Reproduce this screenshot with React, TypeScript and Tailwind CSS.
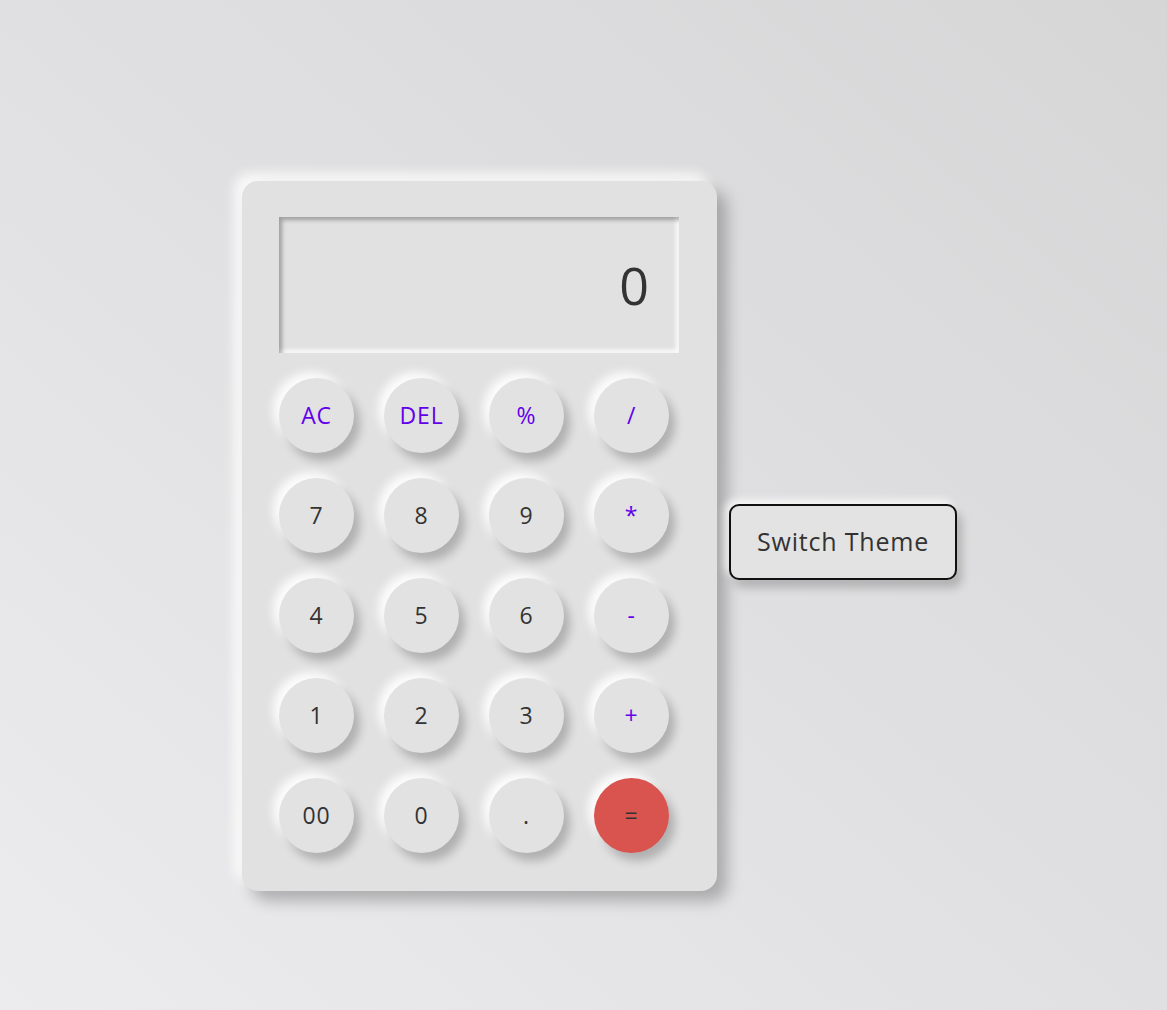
const keys: { label: string; kind: 'op' | 'num' | 'eq' }[] = [
  { label: 'AC', kind: 'op' },
  { label: 'DEL', kind: 'op' },
  { label: '%', kind: 'op' },
  { label: '/', kind: 'op' },
  { label: '7', kind: 'num' },
  { label: '8', kind: 'num' },
  { label: '9', kind: 'num' },
  { label: '*', kind: 'op' },
  { label: '4', kind: 'num' },
  { label: '5', kind: 'num' },
  { label: '6', kind: 'num' },
  { label: '-', kind: 'op' },
  { label: '1', kind: 'num' },
  { label: '2', kind: 'num' },
  { label: '3', kind: 'num' },
  { label: '+', kind: 'op' },
  { label: '00', kind: 'num' },
  { label: '0', kind: 'num' },
  { label: '.', kind: 'num' },
  { label: '=', kind: 'eq' },
]

function Key({ label, kind }: { label: string; kind: 'op' | 'num' | 'eq' }) {
  const tone =
    kind === 'op'
      ? 'text-[#6200ea] bg-[#e2e2e2]'
      : kind === 'eq'
        ? 'text-[#333] bg-[#d9534f]'
        : 'text-[#333] bg-[#e2e2e2]'
  return (
    <button
      className={`w-[75px] h-[75px] rounded-full flex items-center justify-center text-[23px] tracking-[0.8px] shadow-[6px_8px_10px_rgba(0,0,0,0.22),-6px_-6px_10px_rgba(255,255,255,0.9)] ${tone}`}
    >
      {label}
    </button>
  )
}

export default function App() {
  return (
    <div
      className="min-h-screen w-full bg-[linear-gradient(to_top_right,#ececee,#e0e0e2_50%,#d6d6d7)] pt-[181px] pl-[242px]"
      style={{ fontFamily: '"Open Sans", "Noto Sans", sans-serif' }}
    >
      <div className="flex items-center gap-3">
        {/* calculator body */}
        <div className="w-[475px] h-[710px] rounded-2xl bg-[#e1e1e1] pt-9 pl-[37px] shadow-[10px_10px_15px_rgba(0,0,0,0.25),-8px_-8px_12px_rgba(255,255,255,0.8)]">
          <div className="w-[400px] h-[136px] bg-[#e1e1e1] flex items-center justify-end pr-[30px] shadow-[inset_3px_3px_4px_rgba(0,0,0,0.3),inset_-3px_-3px_4px_rgba(255,255,255,0.9)]">
            <span className="text-[52px] text-[#333] leading-none">0</span>
          </div>
          <div className="mt-[25px] grid grid-cols-[repeat(4,75px)] gap-x-[30px] gap-y-[25px]">
            {keys.map((k) => (
              <Key key={k.label + k.kind} label={k.label} kind={k.kind} />
            ))}
          </div>
        </div>

        <button className="mt-3 w-[228px] h-[76px] rounded-[10px] border-2 border-[#111] bg-[#e3e3e3] text-[#333] text-[25px] tracking-[0.8px] shadow-[5px_8px_10px_rgba(0,0,0,0.2),-4px_-4px_8px_rgba(255,255,255,0.8)]">
          Switch Theme
        </button>
      </div>
    </div>
  )
}
